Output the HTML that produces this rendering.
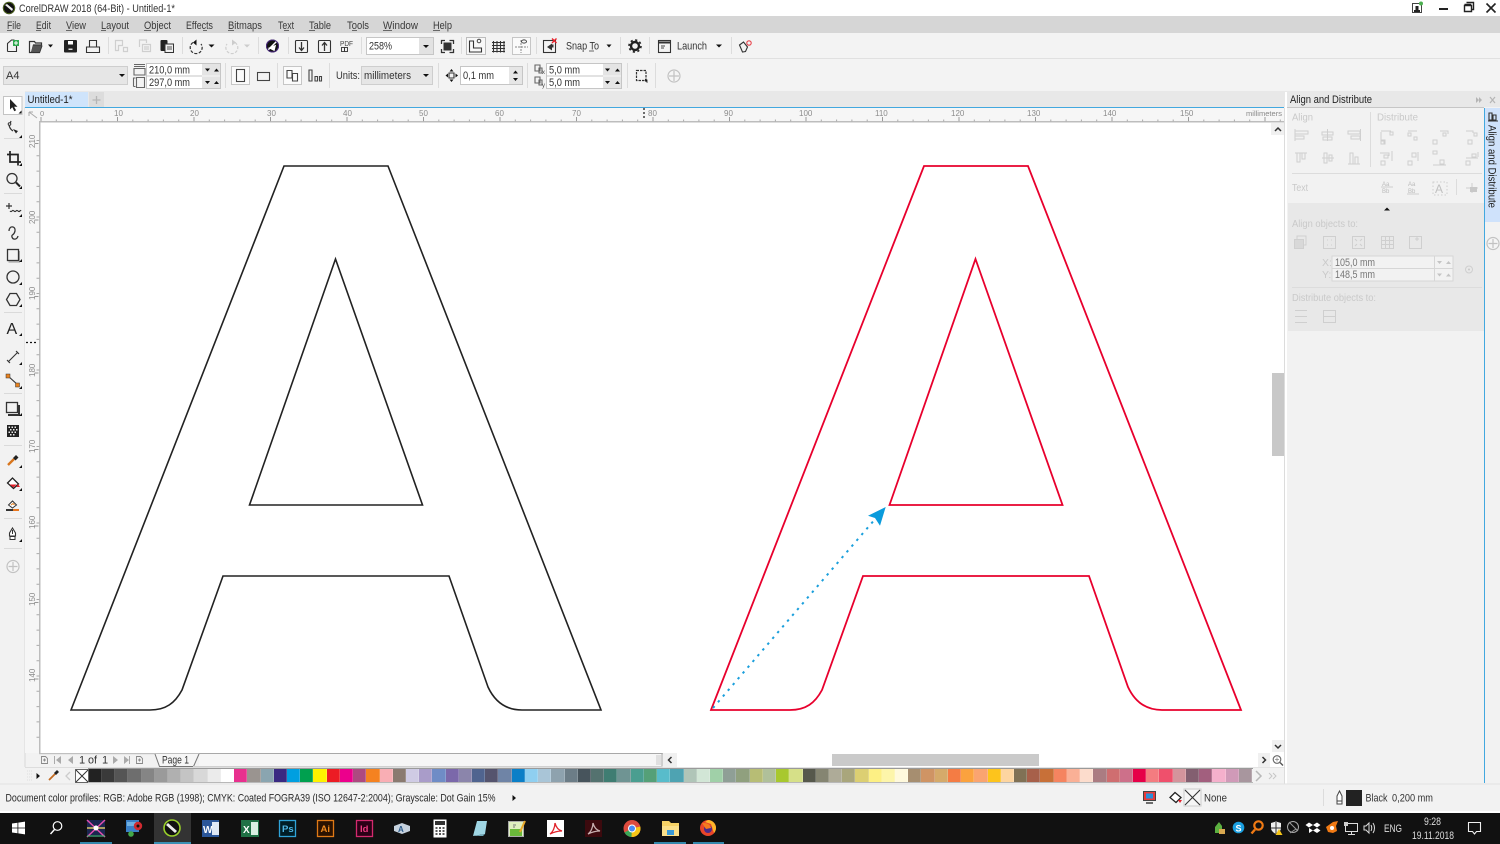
<!DOCTYPE html>
<html><head><meta charset="utf-8"><title>CorelDRAW 2018</title>
<style>
html,body{margin:0;padding:0;width:1500px;height:844px;overflow:hidden;background:#f2f2f2}
svg{display:block;position:absolute;left:0;top:0}
text{font-family:"Liberation Sans",sans-serif;font-size:10px;fill:#333}
.pal{position:absolute;left:88.7px;top:769px;width:1163.5px;height:13px;display:flex}
.pal i{flex:1;display:block;border-right:1px solid rgba(255,255,255,.18);box-sizing:border-box}
.m{font-size:11px;fill:#3a3a3a}
.r{font-size:8px;fill:#8c8c8c}
.d{fill:#c9c9c9;font-size:10.5px}
.ic{fill:none;stroke:#333;stroke-width:1.1}
.dis{fill:none;stroke:#cfcfcf;stroke-width:1}
.t{fill:#111}
</style></head><body>
<svg width="1500" height="844" viewBox="0 0 1500 844" xmlns="http://www.w3.org/2000/svg">
<!-- bands -->
<rect width="1500" height="844" fill="#f2f2f2"/>
<rect width="1500" height="16" fill="#fff"/>
<rect y="16" width="1500" height="17" fill="#d6d6d6"/>
<rect y="33" width="1500" height="25" fill="#f3f3f3"/>
<rect y="58" width="1500" height="1" fill="#e0e0e0"/>
<rect y="59" width="1500" height="32" fill="#f3f3f3"/>
<rect x="25" y="91" width="1262" height="16" fill="#e8e8e8"/>
<rect x="1287" y="91" width="213" height="16" fill="#e8e8e8"/>
<rect x="0" y="91" width="25" height="693" fill="#f2f2f2"/>
<rect x="24.5" y="107" width="1" height="660" fill="#d8d8d8"/>

<!-- title bar -->
<circle cx="9" cy="8" r="6.2" fill="#111"/><path d="M5 5l7 6 1-2-6-5z" fill="#eee"/><circle cx="9" cy="8" r="5.6" fill="none" stroke="#6a8f20" stroke-width=".6"/>
<text x="19" y="12" style="font-size:11px" textLength="156" lengthAdjust="spacingAndGlyphs">CorelDRAW 2018 (64-Bit) - Untitled-1*</text>
<rect x="1412.5" y="3.5" width="9" height="9" fill="#fff" stroke="#444"/><path d="M1414 12v-2h6v2zM1415.5 6h3v4h-3z" fill="#222"/><circle cx="1421" cy="3.5" r="2" fill="#4cb050"/>
<rect x="1439" y="8" width="9" height="2" fill="#222"/>
<path class="ic" style="stroke-width:1.4;stroke:#222" d="M1464.5 4.5h6v1M1466.5 2.5h7v7h-2M1464.5 5.5h7v6h-7z"/>
<path d="M1486.5 3.5l9 9M1495.5 3.5l-9 9" stroke="#222" stroke-width="1.6" fill="none"/>

<!-- menu -->
<text class="m" x="7" y="29" textLength="14" lengthAdjust="spacingAndGlyphs">File</text>
<text class="m" x="36" y="29" textLength="15" lengthAdjust="spacingAndGlyphs">Edit</text>
<text class="m" x="66" y="29" textLength="20" lengthAdjust="spacingAndGlyphs">View</text>
<text class="m" x="101" y="29" textLength="28" lengthAdjust="spacingAndGlyphs">Layout</text>
<text class="m" x="144" y="29" textLength="27" lengthAdjust="spacingAndGlyphs">Object</text>
<text class="m" x="186" y="29" textLength="27" lengthAdjust="spacingAndGlyphs">Effects</text>
<text class="m" x="228" y="29" textLength="34" lengthAdjust="spacingAndGlyphs">Bitmaps</text>
<text class="m" x="278" y="29" textLength="16" lengthAdjust="spacingAndGlyphs">Text</text>
<text class="m" x="309" y="29" textLength="22" lengthAdjust="spacingAndGlyphs">Table</text>
<text class="m" x="347" y="29" textLength="22" lengthAdjust="spacingAndGlyphs">Tools</text>
<text class="m" x="383" y="29" textLength="35" lengthAdjust="spacingAndGlyphs">Window</text>
<text class="m" x="433" y="29" textLength="19" lengthAdjust="spacingAndGlyphs">Help</text>
<path stroke="#444" stroke-width=".8" d="M7 30.5h5M36 30.5h5M66 30.5h6M101 30.5h5M144 30.5h7M203 30.5h4M228 30.5h6M284 30.5h5M309 30.5h6M352 30.5h5M383 30.5h9M433 30.5h7"/>

<!-- toolbar 1 separators -->
<path stroke="#dcdcdc" d="M108.5 37v17M182.5 37v17M258.5 37v17M288.5 37v17M361.5 37v17M461.5 37v17M536.5 37v17M620.5 37v17M649.5 37v17M731.5 37v17"/>
<!-- new -->
<path class="ic" d="M7.5 51.5v-8l4-3.5h3M7.5 51.5h9v-6"/><rect x="13" y="40" width="6" height="6" fill="#2fa84f"/><path d="M16 41v4M14 43h4" stroke="#fff"/>
<!-- open -->
<path d="M29.5 52.500v-11h5l1 1.500h6v2h-8l-2 7.500zm0 0h10l2.500-7" class="ic" style="stroke-width:1.2"/><path d="M31 52l2-6.500h8.500l-2 6.500z" fill="#555"/><polygon class="t" points="48,44.500 53,44.500 50.500,47.500"/>
<!-- save -->
<rect x="64" y="40" width="13" height="12.500" rx="1" fill="#222"/><rect x="68" y="41" width="5" height="3.500" fill="#fff"/><rect x="68.500" y="48.500" width="4" height="1.500" fill="#ddd"/>
<!-- print -->
<path class="ic" d="M89.500 47v-6.500h7v6.500M86.500 52.500v-5.500h13v5.500z"/>
<!-- cut/copy/paste -->
<path class="dis" style="stroke-width:1.2" d="M115.500 50.500v-10h7v5h-4v5zM123.500 47.500h4v4h-4zM139.500 47v-7h7v3M142.500 44.500h8v7h-8zM144 47h5M144 49h5"/>
<rect x="160.500" y="40" width="7" height="11" rx="1" fill="#222"/><rect x="165" y="44" width="8.500" height="8.500" fill="#f0f0f0" stroke="#333"/><path d="M167 47h5M167 49h5" stroke="#555"/>
<!-- undo/redo -->
<path class="ic" style="stroke-width:1.2;stroke-dasharray:3 1.500" d="M193 42.500a6 6 0 1 0 8 1.500"/><polygon class="t" points="196.500,39.500 193,42.500 196.500,45.500"/><polygon class="t" points="208.500,44.500 214.500,44.500 211.500,47.500"/>
<path class="dis" style="stroke-width:1.2;stroke-dasharray:3 1.500" d="M235 42.500a6 6 0 1 1 -8 1.500"/><polygon fill="#ccc" points="232,39.500 236,42.500 232,45.500"/><polygon fill="#ccc" points="244,44.500 250,44.500 247,47.500"/>
<!-- corel -->
<circle cx="272.500" cy="46" r="6.500" fill="#111"/><path d="M268 50l9-9M270 48l5-2-1 4z" stroke="#fff" stroke-width="1.500" fill="#fff"/><circle cx="272.500" cy="46" r="6" fill="none" stroke="#4b2a82"/>
<!-- import/export -->
<rect x="295.500" y="40.500" width="12" height="12" class="ic" rx="1"/><path d="M301.500 42v8M299 47.500l2.500 3 2.500-3" class="ic" style="stroke-width:1.3"/>
<rect x="318.500" y="40.500" width="12" height="12" class="ic" rx="1"/><path d="M324.500 51v-8M322 45.500l2.500-3 2.500 3" class="ic" style="stroke-width:1.3"/>
<text x="340" y="46" style="font-size:7px;fill:#444" textLength="13" lengthAdjust="spacingAndGlyphs">PDF</text><rect x="341.500" y="47.500" width="6" height="4" class="ic" style="stroke-width:.9"/><path d="M344.500 47v5" stroke="#333"/>
<!-- zoom combo -->
<rect x="366.500" y="37.500" width="67" height="17" fill="#fff" stroke="#c6c6c6"/><rect x="419" y="38" width="14" height="16" fill="#e2e2e2"/>
<text x="369" y="49.500" style="font-size:11px" textLength="23" lengthAdjust="spacingAndGlyphs">258%</text><polygon class="t" points="423,45 429,45 426,48"/>
<rect x="443.500" y="42.500" width="8" height="8" fill="#333"/><path class="ic" style="stroke-width:1.3" d="M441.500 44v-3.500h3.500M449.500 40.500h4v3.500M441.500 49v3.500h3.500M449.500 52.500h4v-3.500"/>
<!-- rulers / grid / guides -->
<rect x="466.500" y="37.500" width="19" height="17" fill="#f8f8f8" stroke="#bdbdbd"/><path class="ic" d="M469.500 41v11h12v-4h-8v-7z"/><circle cx="479" cy="41" r="1.800" fill="none" stroke="#444"/>
<path stroke="#333" stroke-width="1.1" d="M492 42.500h13M492 45.500h13M492 48.500h13M492 51.500h13M493.500 41v11.500M497 41v11.500M500.500 41v11.500M504 41v11.500"/>
<rect x="512.500" y="37.500" width="18" height="17" fill="#fafafa" stroke="#c6c6c6"/><path stroke="#888" d="M521 40v13M515 47h13" stroke-dasharray="2 1"/><ellipse cx="524" cy="41.500" rx="2.500" ry="1.600" fill="none" stroke="#444"/>
<!-- snap -->
<rect x="543.500" y="40.500" width="12" height="12" class="ic"/><path d="M547 47l5 3.500v-3h1.500v-3h-1.500v-1z" fill="#333"/><path d="M552 38.500l4.500 4.500M556.500 38.500l-4.500 4.500" stroke="#e8212a" stroke-width="1.4"/>
<text x="566" y="49.500" style="font-size:11px" textLength="33" lengthAdjust="spacingAndGlyphs">Snap To</text><path d="M589 51h5" stroke="#444" stroke-width=".8"/>
<polygon class="t" points="606.500,44.500 611.500,44.500 609,47.500"/>
<circle cx="635" cy="46" r="4" fill="none" stroke="#222" stroke-width="2.4"/><circle cx="635" cy="46" r="6" fill="none" stroke="#222" stroke-width="1.6" stroke-dasharray="2.2 2.5"/>
<rect x="658.500" y="40.500" width="12" height="12" class="ic"/><path d="M659 42.500h11" stroke="#333" stroke-width="2"/><path d="M661 46h4M661 48h3" stroke="#444"/>
<text x="677" y="49.500" style="font-size:11px" textLength="30" lengthAdjust="spacingAndGlyphs">Launch</text><polygon class="t" points="716,44.500 722,44.500 719,47.500"/>
<path class="ic" d="M739.500 45l4-3 4 5-2 4.500-3 .5z"/><circle cx="749" cy="43" r="2.200" fill="none" stroke="#e8424a" stroke-width="1.1"/>

<!-- toolbar 2 -->
<rect x="3.500" y="66.500" width="124" height="18" fill="#e6e6e6" stroke="#cecece"/><text x="6" y="79" style="font-size:11px">A4</text><polygon class="t" points="119,74 125,74 122,77"/>
<path class="ic" style="stroke:#666" d="M134 66.500h11M134 64.500h11M134 68.500h11v6.500h-11zM133.500 77.500v9M136.500 77.500h8v10h-8zM133.500 78h2M133.500 86.500h2"/>
<rect x="146.500" y="63.500" width="74" height="25" fill="#fff" stroke="#c6c6c6"/><path d="M146 76h75" stroke="#c6c6c6"/><rect x="202" y="64" width="18" height="24" fill="#e4e4e4"/><path d="M202 76h18" stroke="#f6f6f6"/>
<text x="149" y="73.500" style="font-size:11px" textLength="41" lengthAdjust="spacingAndGlyphs">210,0 mm</text><text x="149" y="86" style="font-size:11px" textLength="41" lengthAdjust="spacingAndGlyphs">297,0 mm</text>
<path class="t" d="M205 68.500h5l-2.500 3zM205 81h5l-2.500 3zM214 71.500h5l-2.500-3zM214 84h5l-2.500-3z"/>
<path stroke="#dcdcdc" d="M225.500 63v25M277.500 63v25M329.500 63v25M438.500 63v25M527.500 63v25M627.500 63v25M655.500 63v25"/>
<rect x="231.500" y="66.500" width="18" height="18" fill="#fbfbfb" stroke="#c6c6c6"/><rect x="236.500" y="69.500" width="8" height="12" class="ic" style="stroke:#444"/>
<rect x="257.500" y="72.500" width="12" height="8" class="ic" style="stroke:#444"/>
<rect x="283.500" y="66.500" width="18" height="18" fill="#fbfbfb" stroke="#c6c6c6"/><path class="ic" style="stroke:#444" d="M287 70.500h5v7.500h-5zM292.500 73.500h5v7.500h-5z"/>
<path class="ic" style="stroke:#444" d="M309 70h3v11h-3zM315 76.500h2.500v4.500h-2.500zM319.500 76.500h2v4.500h-2z"/>
<text x="336" y="79" style="font-size:11px" textLength="24" lengthAdjust="spacingAndGlyphs">Units:</text>
<rect x="361.500" y="66.500" width="71" height="18" fill="#e6e6e6" stroke="#cecece"/><text x="364" y="79" style="font-size:11px" textLength="47" lengthAdjust="spacingAndGlyphs">millimeters</text><polygon class="t" points="423,74 429,74 426,77"/>
<path class="ic" d="M449 73h5v5h-5z"/><path class="t" d="M451.500 69l2 2.500h-4zM451.500 82l2-2.500h-4zM445.500 75.500l2.500-2v4zM458 75.500l-2.500-2v4z"/>
<rect x="460.500" y="66.500" width="62" height="18" fill="#fff" stroke="#c6c6c6"/><rect x="509" y="67" width="13" height="17" fill="#e6e6e6"/>
<text x="463" y="79" style="font-size:11px" textLength="31" lengthAdjust="spacingAndGlyphs">0,1 mm</text><path class="t" d="M515.500 70.500l2.500 3h-5zM515.500 81l2.500-3h-5z"/>
<path class="ic" style="stroke:#666" d="M535 65h5v6h-5zM539 68h3v5h-3zM535 77h5v6h-5zM539 80h3v5h-3z"/><text x="542" y="74" style="font-size:6px;fill:#555">x</text><text x="542" y="87" style="font-size:6px;fill:#555">y</text>
<rect x="546.500" y="63.500" width="75" height="25" fill="#fff" stroke="#c6c6c6"/><path d="M546 76h76" stroke="#c6c6c6"/><rect x="603" y="64" width="18" height="24" fill="#e4e4e4"/><path d="M603 76h18" stroke="#f6f6f6"/>
<text x="549" y="73.500" style="font-size:11px" textLength="31" lengthAdjust="spacingAndGlyphs">5,0 mm</text><text x="549" y="86" style="font-size:11px" textLength="31" lengthAdjust="spacingAndGlyphs">5,0 mm</text>
<path class="t" d="M605 68.500h5l-2.500 3zM605 81h5l-2.500 3zM615 71.500h5l-2.500-3zM615 84h5l-2.500-3z"/>
<path class="ic" style="stroke-dasharray:2.5 1;stroke-width:1.2" d="M636.500 70.500h9.500v10h-9.500z"/><path class="t" d="M645 79l3 1-1 .8.8 1.500-1 .4-.7-1.500-.9.7z"/>
<circle cx="674" cy="76" r="6" fill="#f5f5f5" stroke="#c2c2c2" stroke-width="1.2"/><path d="M674 71v10M669 76h10" stroke="#c2c2c2" stroke-width="1.2"/>

<!-- tabs -->
<rect x="25" y="92" width="63" height="15" fill="#cfe4fb"/><text x="27.500" y="103" style="font-size:11px;fill:#222" textLength="45" lengthAdjust="spacingAndGlyphs">Untitled-1*</text>
<rect x="89" y="92" width="15" height="15" fill="#dcdcdc"/><path d="M96.500 96v8M92.500 100h8" stroke="#b5b5b5" stroke-width="1.3"/>
<rect x="25" y="107" width="1259" height="1" fill="#42a8df"/>

<!-- rulers -->
<rect x="25" y="108" width="1259" height="14" fill="#f6f6f6"/>
<rect x="25" y="122" width="15" height="631" fill="#f6f6f6"/>
<rect x="40" y="122" width="1230" height="631" fill="#fff"/>
<rect x="39" y="121" width="1245" height="1.5" fill="#bdbdbd"/>
<rect x="39" y="121" width="1.5" height="633" fill="#bdbdbd"/>
<path d="M40.5 120.500h1243" stroke="#aaa" stroke-width="2" stroke-dasharray="1 14.3" fill="none"/>
<path d="M40.5 119h1243" stroke="#999" stroke-width="4" stroke-dasharray="1 75.5" fill="none"/>
<path d="M38 140v612" stroke="#aaa" stroke-width="3" stroke-dasharray="1 14.3" fill="none"/>
<path d="M36.500 143v612" stroke="#999" stroke-width="4" stroke-dasharray="1 75.5" fill="none"/>
<path class="dis" style="stroke:#aaa" d="M29 112l8 6M29 112h4M29 112v4"/>
<text class="r" x="40" y="116" style="font-size:7.5px">0</text>
<text class="r" x="114" y="116">10</text><text class="r" x="190" y="116">20</text><text class="r" x="267" y="116">30</text><text class="r" x="343" y="116">40</text><text class="r" x="419" y="116">50</text><text class="r" x="495" y="116">60</text><text class="r" x="572" y="116">70</text><text class="r" x="648" y="116">80</text><text class="r" x="724" y="116">90</text><text class="r" x="799" y="116">100</text><text class="r" x="875" y="116">110</text><text class="r" x="951" y="116">120</text><text class="r" x="1027" y="116">130</text><text class="r" x="1103" y="116">140</text><text class="r" x="1180" y="116">150</text>
<text x="1246" y="116" style="font-size:7.5px;fill:#888" textLength="36" lengthAdjust="spacingAndGlyphs">millimeters</text>
<path d="M644 108v12" stroke="#111" stroke-dasharray="2 2" stroke-width="1.2"/>
<path d="M26 342.500h12" stroke="#111" stroke-dasharray="2 2" stroke-width="1.2"/>
<text class="r" transform="translate(35,148) rotate(-90)">210</text><text class="r" transform="translate(35,224) rotate(-90)">200</text><text class="r" transform="translate(35,300) rotate(-90)">190</text><text class="r" transform="translate(35,377) rotate(-90)">180</text><text class="r" transform="translate(35,453) rotate(-90)">170</text><text class="r" transform="translate(35,529) rotate(-90)">160</text><text class="r" transform="translate(35,606) rotate(-90)">150</text><text class="r" transform="translate(35,682) rotate(-90)">140</text>

<!-- toolbox -->
<rect x="3.500" y="96.500" width="18.500" height="18" fill="#fff" stroke="#c4c4c4"/>
<path d="M10 99l0 10.500 2.300-2.300 2 4 1.800-.9-2-3.600h3.400z" fill="#222"/>
<path stroke="#dadada" d="M4 138.500h18M4 193.500h18M4 312.500h18M4 393.500h18M4 445.500h18M4 518.500h18M4 548.500h18"/>
<path class="ic" style="stroke-width:1.2" d="M9 124c0 3 1 5 4 7M11 121l-1 3"/><path d="M13 129l5 2-2 2.500z" fill="#222"/><circle cx="9.500" cy="124" r="1.300" fill="#fff" stroke="#333"/>
<path class="ic" style="stroke-width:1.7;stroke:#222" d="M10 151v11h11M7 154.500h11v11"/>
<circle cx="12" cy="178.500" r="5" class="ic" style="stroke-width:1.3"/><path d="M16 182.500l4 4" stroke="#222" stroke-width="2"/>
<path class="ic" d="M9 203v6M6 206h6M10 211c2 2 2-2 4 0s2-2 4 0 2-2 3 0" style="stroke-width:1.2"/>
<path class="ic" style="stroke-width:1.3" d="M9 231c0-6 7-5 6 0s-4 3-3 6 5 3 6-1"/>
<rect x="7.500" y="249.500" width="11" height="11" class="ic" style="stroke-width:1.3"/><path d="M19.500 251v11h-11" stroke="#999" fill="none"/>
<circle cx="13" cy="277" r="6" class="ic" style="stroke-width:1.3"/>
<path class="ic" style="stroke-width:1.3" d="M10 293.500h6.500l3.500 6-3.500 6h-6.500l-3.500-6z"/>
<text x="6.500" y="334" style="font-size:16px;fill:#222">A</text>
<path class="ic" d="M8 362l10-10M7 360l3 3M16 351l3 3"/>
<path class="ic" d="M8 376l10 9"/><rect x="6" y="374" width="4" height="4" fill="#e8811e" stroke="#333" stroke-width=".5"/><rect x="15.500" y="383" width="4" height="4" fill="#e8811e" stroke="#333" stroke-width=".5"/>
<rect x="6.500" y="402.500" width="11" height="10" class="ic" style="stroke-width:1.3"/><path d="M19 405v10h-11" stroke="#333" stroke-width="2" fill="none"/>
<rect x="7" y="425" width="12" height="12" fill="#222"/><path d="M8.500 426.500h1.500v1.500h-1.500zM11.500 426.500h1.500v1.500h-1.500zM14.500 426.500h1.500v1.500h-1.500zM10 429h1.500v1.500h-1.500zM13 429h1.500v1.500h-1.500zM16 429h1.500v1.500h-1.500zM8.500 431.500h1.500v1.500h-1.500zM11.500 431.500h1.500v1.500h-1.500zM14.500 431.500h1.500v1.500h-1.500zM10 434h1.500v1.500h-1.500zM13 434h1.500v1.500h-1.500z" fill="#e8e8e8"/>
<path d="M8 465l6-6" stroke="#d8761e" stroke-width="2.4"/><path d="M13 458l3-3 2.500 2.500-3 3z" fill="#222"/>
<path d="M7.500 483l5-5 6 6-5 4.500z" fill="#fff" stroke="#222" stroke-width="1.3"/><path d="M9.500 484.500h7l-3 3z" fill="#e4202a"/><path d="M18 484l2 3h-3.500z" fill="#e4202a"/>
<path d="M8.500 505l4-4 4 4-4 3z" fill="#fff" stroke="#333"/><path d="M11 505l2-1.500 1.500 1.500" stroke="#e8811e" fill="none"/><rect x="6" y="509" width="7" height="2" fill="#333"/><rect x="13" y="509" width="6" height="2" fill="#e8761e"/>
<path d="M12.500 528l3 5v3h-6v-3z" fill="#fff" stroke="#333" stroke-width="1.1"/><rect x="10" y="536.500" width="5" height="3" fill="#fff" stroke="#333"/><path d="M12.500 530v4" stroke="#333"/>
<circle cx="13" cy="566.500" r="6" fill="#f5f5f5" stroke="#c2c2c2" stroke-width="1.2"/><path d="M13 562v9M8.500 566.500h9" stroke="#c2c2c2" stroke-width="1.2"/>
<path class="t" d="M21.500 110.500v3h-3zM22 135v3h-3zM22 163v3h-3zM22 186v3h-3zM22 214v3h-3zM22 259v3h-3zM22 282v3h-3zM22 304v3h-3zM22 333v3h-3zM22 362v3h-3zM22 386v3h-3zM22 413v3h-3zM22 465v3h-3zM22 488v3h-3zM22 539v3h-3z"/>

<!-- artwork -->
<g fill="none" stroke-linejoin="miter">
<path stroke="#e8002d" stroke-width="1.8" d="M711 710L924 166H1028L1241 710H1162C1146 710 1135 702 1128 687L1089 576H863L822 690C815 703 806 710 790 710Z"/>
<path stroke="#e8002d" stroke-width="1.8" d="M975.5 259L1062.5 505H889.5Z"/>
<path stroke="#222" stroke-width="1.6" d="M71 710L284 166H388L601 710H522C506 710 495 702 488 687L449 576H223L182 690C175 703 166 710 150 710Z"/>
<path stroke="#222" stroke-width="1.6" d="M335.5 259L422.500 505H249.5Z"/>
<path stroke="#1a9fdc" stroke-width="2" stroke-dasharray="2.4 5.2" d="M713 708L876 518"/>
</g>
<path d="M885.7 507L868 515.7L875 518L880 525.7Z" fill="#0a9bdc"/>

<!-- vertical scrollbar -->
<rect x="1270" y="122.500" width="14" height="646" fill="#fff"/>
<rect x="1271" y="123" width="13" height="12" fill="#f0f0f0"/><path d="M1275 131l3-3 3 3" class="ic" style="stroke-width:1.5"/>
<rect x="1272" y="373" width="12" height="83" fill="#c8c8c8"/>
<rect x="1272" y="740" width="12" height="13" fill="#f0f0f0"/><path d="M1275 745l3 3 3-3" class="ic" style="stroke-width:1.5"/>
<rect x="1284" y="108" width="1" height="676" fill="#dcdcdc"/>
<rect x="1285" y="92" width="2" height="692" fill="#fff"/>

<!-- docker -->
<rect x="1287" y="107" width="197" height="1" fill="#c6c6c6"/>
<rect x="1288" y="108" width="196" height="95" fill="#f2f2f2"/>
<rect x="1288" y="203" width="196" height="128" fill="#e8e8e8"/>
<rect x="1288" y="331" width="196" height="453" fill="#f2f2f2"/>
<rect x="1484" y="108" width="1" height="675" fill="#42a8df"/>
<rect x="1485" y="108" width="15" height="114" fill="#cfe2fb"/>
<text x="1290" y="103" style="font-size:11px;fill:#222" textLength="82" lengthAdjust="spacingAndGlyphs">Align and Distribute</text>
<path d="M1476 97v6l3-3zM1479 97v6l3-3z" fill="#b5b5b5"/><path d="M1490 97l5 6M1495 97l-5 6" stroke="#b5b5b5" stroke-width="1.2"/>
<text class="d" x="1292" y="120.500" textLength="21" lengthAdjust="spacingAndGlyphs">Align</text><text class="d" x="1377" y="120.500" textLength="41" lengthAdjust="spacingAndGlyphs">Distribute</text>
<path stroke="#dcdcdc" d="M1370.5 112v55M1292 173.500h190M1456.5 179v16"/>
<g class="dis">
<path d="M1295 131h13v3h-13zM1295 136h9v3h-9zM1295 129v12M1322 132h11v3h-11zM1323 137h9v3h-9zM1327.5 129v12M1348 131h12v3h-12zM1351 136h9v3h-9zM1360.5 129v12"/>
<path d="M1295 153h12M1297 153v9h3v-9zM1302 153v6h3v-6zM1322 158h12M1324 153v10h3v-10zM1329 155v6h3v-6zM1348 164h12M1350 153v11h3v-11zM1355 157v7h3v-7z"/>
<path d="M1381 132v12h3v-3h-3zM1381 131h10M1390 132h3v3h-3zM1381 140h4v4h-4zM1408 131h9M1408 133h3v3h-3zM1414 137h3v3h-3zM1433 140h4v4h-4zM1440 131h8v3M1443 133h3v3h-3zM1466 131h7v2M1468 140h4v4h-4zM1474 133h3v3h-3z"/>
<path d="M1380 153h9v3M1384 155h4v3h-4zM1381 161h4v4h-4zM1392 151v10M1408 161h4v4h-4zM1412 153h4v4h-4zM1418 152v9M1433 151h4v3h-4zM1440 160h4v4h-4zM1433 165h13M1466 161h4v4h-4zM1472 154h4v3h-4zM1466 158h12M1478 152v5"/>
</g>
<text class="d" x="1292" y="191" textLength="16" lengthAdjust="spacingAndGlyphs">Text</text>
<text x="1382" y="186" style="font-size:6px;fill:#bbb">Aa</text><text x="1382" y="193" style="font-size:6px;fill:#bbb">Bb</text><text x="1408" y="186" style="font-size:6px;fill:#bbb">Aa</text><text x="1408" y="193" style="font-size:6px;fill:#bbb">Bb</text>
<path class="dis" d="M1381 187h12M1407 194h12M1466 188h12M1472 183v10"/>
<text x="1435" y="193" style="font-size:12px;fill:#c0c0c0">A</text><path class="dis" style="stroke-dasharray:1.5 2" d="M1433 182h14v13h-14z"/>
<rect x="1470" y="187" width="7" height="5" fill="#c8c8c8"/>
<path class="t" d="M1387 207.500l3 3h-6z"/>
<text class="d" x="1292" y="227" textLength="66" lengthAdjust="spacingAndGlyphs">Align objects to:</text>
<g class="dis">
<rect x="1294.5" y="239.500" width="9" height="9" fill="#d8d8d8"/><path d="M1297 239v-3h9v9h-3"/>
<rect x="1323.5" y="236.500" width="12" height="12"/><rect x="1352.5" y="236.500" width="12" height="12"/>
<path d="M1327 240h1M1331 240h1M1327 245h1M1331 245h1M1355 239l2 2M1362 239l-2 2M1355 246l2-2M1362 246l-2-2"/>
<path d="M1381.5 236.500h12v12h-12zM1385.5 236.500v12M1389.5 236.500v12M1381.5 240.500h12M1381.5 244.500h12"/>
<path d="M1409.5 236.500h12v12h-12zM1415 239h4M1417 237v4"/>
</g>
<rect x="1332" y="256" width="121" height="25" fill="#f2f2f2" stroke="#d6d6d6"/><path d="M1332 268.500h121M1434.5 256v25" stroke="#d6d6d6"/>
<text class="d" x="1322" y="266">X:</text><text class="d" x="1322" y="278">Y:</text>
<text x="1335" y="266" style="font-size:11px;fill:#777" textLength="40" lengthAdjust="spacingAndGlyphs">105,0 mm</text><text x="1335" y="278" style="font-size:11px;fill:#777" textLength="40" lengthAdjust="spacingAndGlyphs">148,5 mm</text>
<path fill="#c4c4c4" d="M1437 261h5l-2.500 3zM1446 264h5l-2.500-3zM1437 273.500h5l-2.500 3zM1446 276.500h5l-2.500-3z"/>
<circle cx="1469" cy="269.500" r="3.500" class="dis"/><circle cx="1469" cy="269.500" r="1" fill="#c8c8c8"/>
<path stroke="#dcdcdc" d="M1292 287.500h190"/>
<text class="d" x="1292" y="301" textLength="84" lengthAdjust="spacingAndGlyphs">Distribute objects to:</text>
<g class="dis"><path d="M1295 310.500h12M1295 322.500h12M1295 316.500h12"/><rect x="1323.5" y="310.500" width="12" height="12"/><path d="M1323 316.500h13"/></g>
<!-- docker tab -->
<path class="ic" style="stroke:#333" d="M1489 113h3v7h-3zM1493 115h3v5h-3zM1488 121h10"/>
<text transform="translate(1488.5,125) rotate(90)" style="font-size:11px;fill:#222" textLength="83" lengthAdjust="spacingAndGlyphs">Align and Distribute</text>
<circle cx="1493" cy="243.500" r="6" fill="#f5f5f5" stroke="#c2c2c2" stroke-width="1.2"/><path d="M1493 239v9M1488.5 243.500h9" stroke="#c2c2c2" stroke-width="1.2"/>

<!-- page nav -->
<rect x="25.5" y="753" width="638" height="15" fill="#f2f2f2"/>
<rect x="663" y="752" width="621" height="16" fill="#fff"/>
<rect x="39" y="753" width="624" height="1.2" fill="#c0c0c0"/>
<g fill="#aaa">
<path class="ic" style="stroke:#888;stroke-width:.9" d="M41.5 756.500h4l2 2v5h-6zM43 760h3M44.5 758.500v3"/>
<path d="M54 756v8h1v-8zM61 756l-5 4 5 4zM73 756l-5 4 5 4zM113 756l5 4-5 4zM124 756l5 4-5 4zM130 756v8h-1v-8z"/>
<path class="ic" style="stroke:#888;stroke-width:.9" d="M136.5 756.500h4l2 2v5h-6zM138 760h3M139.500 758.500v3"/>
</g>
<text x="79" y="763.500" style="font-size:11px">1</text><text x="88" y="763.500" style="font-size:11px" textLength="9" lengthAdjust="spacingAndGlyphs">of</text><text x="102" y="763.500" style="font-size:11px">1</text>
<path d="M199 754h463v12.500h-463" fill="#f6f6f6"/>
<path d="M155 754l4.500 12.500h34l5.500-12.500" fill="#f6f6f6" stroke="#777"/>
<path d="M199 753.500h463v13" fill="none" stroke="#a8a8a8"/><path d="M193 766.500h469" stroke="#d0d0d0"/>
<text x="162" y="763.500" style="font-size:11px" textLength="27" lengthAdjust="spacingAndGlyphs">Page 1</text>
<rect x="656" y="755" width="5" height="10" fill="#e0e0e0"/>
<rect x="663" y="753" width="14" height="14" fill="#f0f0f0"/><path d="M671.5 757l-3 3 3 3" class="ic" style="stroke-width:1.5"/>
<rect x="832" y="754" width="207" height="12" fill="#cacaca"/>
<rect x="1258" y="753" width="12" height="14" fill="#f0f0f0"/><path d="M1262.5 757l3 3-3 3" class="ic" style="stroke-width:1.5"/>
<circle cx="1277" cy="759.500" r="3.800" class="ic" style="stroke:#666"/><path d="M1280 762.500l3 3" stroke="#555" stroke-width="1.4"/><path d="M1275 759.500h4M1277 757.500v4" stroke="#888" stroke-width=".8"/>

<!-- palette row -->
<rect x="25" y="767.500" width="1259" height="1" fill="#c8c8c8"/>
<rect x="25" y="768" width="1259" height="16" fill="#f2f2f2"/>
<path d="M27 771h6M27 774h6M27 777h6M27 780h6" stroke="#ddd" stroke-dasharray="1 1"/>
<path class="t" d="M36.5 773v6l3.500-3z"/>
<path d="M49 780l6-6" stroke="#c26a20" stroke-width="1.8"/><path d="M54 773l3-3 2 2-3 3z" fill="#222"/>
<path d="M70 772l-4 4 4 4" stroke="#ccc" stroke-width="1.3" fill="none"/>
<rect x="75.5" y="769.500" width="13" height="13" fill="#fff" stroke="#666"/><path d="M76 770l12 12M88 770l-12 12" stroke="#333"/>
<path d="M1256 771l5 5-5 5" stroke="#b8b8b8" stroke-width="1.5" fill="none"/><path d="M1269 773l3 3-3 3M1273 773l3 3-3 3" stroke="#c6c6c6" fill="none"/>
<rect x="88" y="768" width="1165" height="1" fill="#9a9a9a"/>
<rect x="88" y="782" width="1165" height="1" fill="#b8b8b8"/>

<!-- status bar -->
<rect y="783.500" width="1500" height="1" fill="#e2e2e2"/>
<rect y="811" width="1500" height="2" fill="#fff"/>
<text x="5.500" y="801.500" style="font-size:11px;fill:#2a2a2a" textLength="490" lengthAdjust="spacingAndGlyphs">Document color profiles: RGB: Adobe RGB (1998); CMYK: Coated FOGRA39 (ISO 12647-2:2004); Grayscale: Dot Gain 15%</text>
<path class="t" d="M512.5 795v6l3.500-3z"/>
<rect x="1143.5" y="791.500" width="12" height="9" fill="#e83a3a" stroke="#444"/><rect x="1146" y="793.500" width="7" height="5" fill="#2a8fd8"/><path d="M1146 803h7" stroke="#333" stroke-width="1.4"/>
<path d="M1170 797.500l5-5 6 5-5 5z" fill="#fff" stroke="#222" stroke-width="1.3"/><path d="M1178 800h4l-2 3z" fill="#e4202a"/>
<rect x="1184" y="789" width="17" height="17" fill="#f6f6f6" stroke="#ccc"/><path d="M1185 790l15 15M1200 790l-15 15" stroke="#333" stroke-width="1.1"/>
<text x="1204" y="801.500" style="font-size:11px" textLength="23" lengthAdjust="spacingAndGlyphs">None</text>
<path stroke="#dcdcdc" d="M1323.5 789v17"/>
<path d="M1339.5 791l2.500 5v5h-5v-5z" fill="#fff" stroke="#444"/><rect x="1337" y="801" width="5" height="3" fill="#fff" stroke="#444"/>
<rect x="1346" y="790" width="16" height="16" fill="#222"/>
<text x="1365.500" y="801.500" style="font-size:11px" textLength="22" lengthAdjust="spacingAndGlyphs">Black</text><text x="1392" y="801.500" style="font-size:11px" textLength="41" lengthAdjust="spacingAndGlyphs">0,200 mm</text>

<!-- taskbar -->
<rect y="813" width="1500" height="31" fill="#111"/>
<rect x="154" y="813" width="37" height="31" fill="#333"/>
<path fill="#3fb0e0" opacity=".75" d="M80 842h32v2h-32zM154 842h37v2h-37zM654 842h32v2h-32zM693 842h31v2h-31z"/>
<path fill="#fff" d="M12 823.500l5.500-.8v4.900h-5.500zM18.300 822.600l6.700-1v6h-6.700zM12 828.400h5.500v4.900l-5.500-.8zM18.300 828.400h6.700v6l-6.700-1z"/>
<circle cx="57.500" cy="826" r="4.300" fill="none" stroke="#fff" stroke-width="1.2"/><path d="M54.500 829.500l-4 4.500" stroke="#fff" stroke-width="1.4"/>
<!-- app icons -->
<rect x="87" y="820" width="18" height="17" fill="#1b2650"/><path d="M87 820l18 17M105 820l-18 17" stroke="#e64fb0" stroke-width="1.5"/><path d="M87 828h18" stroke="#ffe26a" stroke-width="1.2"/><circle cx="96" cy="828" r="2.500" fill="#fff"/><path d="M87 836h18" stroke="#3fc060"/>
<rect x="126" y="820" width="13" height="12" fill="#3a80c8"/><path d="M127 822h11v4h-11z" fill="#70b0e0"/><circle cx="138" cy="826" r="4.200" fill="#d02a30"/><circle cx="138" cy="826" r="1.500" fill="#111"/><circle cx="131" cy="834" r="2.800" fill="#44a848"/>
<circle cx="172" cy="828" r="8" fill="#111" stroke="#9ad02a" stroke-width="1.6"/><path d="M168 823l9 8-2 2-9-8z" fill="#eee"/>
<rect x="202" y="820" width="17" height="17" fill="#2b5699"/><rect x="212" y="822" width="7" height="13" fill="#dfe8f5"/><text x="203" y="833" style="font-size:10px;font-weight:bold;fill:#fff">W</text>
<rect x="241" y="820" width="18" height="17" fill="#1f7145"/><rect x="251" y="822" width="7" height="13" fill="#d9efe2"/><text x="243" y="833" style="font-size:10px;font-weight:bold;fill:#fff">X</text>
<rect x="279.5" y="820.500" width="16" height="16" fill="#001d26" stroke="#2fa3d8" stroke-width="1.3"/><text x="282" y="832" style="font-size:9.5px;font-weight:bold;fill:#4fb5e4">Ps</text>
<rect x="317.5" y="820.500" width="16" height="16" fill="#2b1200" stroke="#e07a16" stroke-width="1.3"/><text x="320.500" y="832" style="font-size:9.5px;font-weight:bold;fill:#f08a1e">Ai</text>
<rect x="356.5" y="820.500" width="16" height="16" fill="#2b0016" stroke="#d42a6e" stroke-width="1.3"/><text x="360" y="832" style="font-size:9.5px;font-weight:bold;fill:#ec3a80">Id</text>
<path d="M394 826l8-3 8 3v5l-8 3-8-3z" fill="#c6d2de"/><text x="398" y="832" style="font-size:8px;fill:#2a5a8a;font-weight:bold">A</text>
<rect x="433.5" y="819.500" width="13" height="18" fill="#fff"/><rect x="435" y="821" width="10" height="4" fill="#333"/><path d="M435.5 828h9M435.5 831h9M435.5 834h9" stroke="#222" stroke-width="1.6" stroke-dasharray="2 1.5"/>
<path d="M473 836l4-15h10l-2 13z" fill="#9fd6e4"/><path d="M474 836h9l2-2z" fill="#6fa8b8"/>
<rect x="508.5" y="821.500" width="15" height="15" fill="#dff0c0" stroke="#aaa"/><rect x="510" y="829" width="12" height="7" fill="#6ab83a"/><path d="M513 825h3M513 827h2" stroke="#777"/><path d="M520 832l5-11" stroke="#e8a82a" stroke-width="2"/>
<rect x="547" y="820" width="17" height="17" fill="#fff"/><path d="M550 834c3-2 5-7 5-11 1 4 3 7 7 8-4 0-8 1-12 3z" fill="none" stroke="#e0222a" stroke-width="1.3"/>
<rect x="585" y="820" width="17" height="17" fill="#3c0a0e"/><path d="M588 834c3-2 5-7 5-11 1 4 3 7 7 8-4 0-8 1-12 3z" fill="none" stroke="#c8b0b0" stroke-width="1.3"/>
<circle cx="632" cy="828.500" r="8.500" fill="#dd4b3e"/><path d="M632 828.500l-7.500 4a8.500 8.500 0 0 0 7 4.500z" fill="#3aa757"/><path d="M632 828.500l8.300-2a8.500 8.500 0 0 1-8.800 10.500z" fill="#f5c518"/><circle cx="632" cy="828.500" r="4" fill="#fff"/><circle cx="632" cy="828.500" r="3" fill="#4a8af4"/>
<path d="M662 821h7l2 2h8v13h-17z" fill="#f6d266"/><rect x="662" y="826" width="17" height="10" fill="#fbe08a"/><rect x="667" y="830" width="7" height="5" fill="#3a9ad8"/>
<circle cx="708" cy="828" r="8" fill="#e8452a"/><path d="M708 820a8 8 0 0 1 8 8c0 2-1 4-2 5l-3-9-6-2z" fill="#fdb52a"/><circle cx="708" cy="829" r="4" fill="#4a2a8a"/><path d="M702 823c3 0 8 0 9 5l-5 1z" fill="#f47a20"/>
<!-- tray -->
<path d="M1215 827l4-5 3 4v7h-7z" fill="#5cb040"/><rect x="1219" y="829" width="6" height="5" fill="#d8a850"/>
<circle cx="1238.5" cy="827.500" r="5.800" fill="#1a9fe0"/><text x="1235.500" y="831.500" style="font-size:9px;font-weight:bold;fill:#fff">S</text>
<circle cx="1258.5" cy="825.500" r="4.200" fill="none" stroke="#f07a14" stroke-width="2.2"/><path d="M1255 829.500l-3.500 4" stroke="#f07a14" stroke-width="2.4"/>
<path d="M1271 823l5-1.500 5 1.500v5c0 3-3 5-5 6-2-1-5-3-5-6z" fill="#eee"/><path d="M1276 822v12M1271 828h10" stroke="#333"/><path d="M1279 829l3.500 6h-7z" fill="#f5c518"/>
<circle cx="1293" cy="827" r="5.500" fill="none" stroke="#aaa"/><path d="M1289 822l9 9M1290 833l6-4" stroke="#999"/>
<path d="M1309 822.500l4 2.500-4 2.500-3.500-2.500zM1317 822.500l3.500 2.500-3.500 2.500-4-2.500zM1309 828l4 2.500-4 2.500z" fill="#fff"/><path d="M1317 828l3.500 2.500-3.500 2.500-4-2.500z" fill="#fff"/>
<path d="M1326 827l7-5 5-1-2 5 1 5-4 2-5-1z" fill="#f07a14"/><circle cx="1332" cy="828" r="2" fill="#fff"/>
<rect x="1345.5" y="823.500" width="12" height="8" fill="none" stroke="#ddd"/><path d="M1348 834.500h7M1351.5 832v2" stroke="#ddd"/><path d="M1344 822h4v4h-4z" fill="#ccc"/>
<path d="M1364 826h2l3-3v10l-3-3h-2z" fill="none" stroke="#ddd"/><path d="M1371 825c1 2 1 4 0 6M1373 823c2 3 2 7 0 10" fill="none" stroke="#ddd"/>
<text x="1384" y="832" style="font-size:11px;fill:#ddd" textLength="18" lengthAdjust="spacingAndGlyphs">ENG</text>
<text x="1424" y="825" style="font-size:11px;fill:#ddd" textLength="17" lengthAdjust="spacingAndGlyphs">9:28</text>
<text x="1412" y="839" style="font-size:11px;fill:#ddd" textLength="42" lengthAdjust="spacingAndGlyphs">19.11.2018</text>
<path d="M1468.5 822.500h12v9h-4l-2 2.500-2-2.500h-4z" fill="none" stroke="#eee" stroke-width="1.1"/>
</svg>
<div class="pal">
<i style="background:#222"></i><i style="background:#3a3a3a"></i><i style="background:#555"></i><i style="background:#6e6e6e"></i><i style="background:#858585"></i><i style="background:#9a9a9a"></i><i style="background:#b0b0b0"></i><i style="background:#c4c4c4"></i><i style="background:#d8d8d8"></i><i style="background:#ebebeb"></i><i style="background:#fff"></i><i style="background:#e8308e"></i><i style="background:#9a9490"></i><i style="background:#8aa5b0"></i><i style="background:#3a2a82"></i><i style="background:#009fe0"></i><i style="background:#00a04f"></i><i style="background:#fff200"></i><i style="background:#ec1c24"></i><i style="background:#ec008c"></i><i style="background:#ad4a80"></i><i style="background:#f58220"></i><i style="background:#f9aeb4"></i><i style="background:#8a7a70"></i><i style="background:#cfcbe4"></i><i style="background:#a99cc9"></i><i style="background:#6f8cc6"></i><i style="background:#7b68aa"></i><i style="background:#8b85ab"></i><i style="background:#50648f"></i><i style="background:#55546e"></i>
<i style="background:#6f84a6"></i><i style="background:#0b7fc7"></i><i style="background:#8fcff0"></i><i style="background:#a9c5d7"></i><i style="background:#8ea2ae"></i><i style="background:#6c7d87"></i><i style="background:#47545c"></i><i style="background:#54726f"></i><i style="background:#3f7d72"></i><i style="background:#6f9493"></i><i style="background:#4a9e90"></i><i style="background:#55a078"></i><i style="background:#58bccb"></i><i style="background:#4ea3b2"></i><i style="background:#b0c5b8"></i><i style="background:#d2e6d6"></i><i style="background:#a0d0a8"></i><i style="background:#8f9f96"></i><i style="background:#90a07e"></i><i style="background:#b7bd75"></i><i style="background:#b0c09a"></i><i style="background:#a8c82e"></i><i style="background:#d6e088"></i><i style="background:#56584c"></i><i style="background:#858572"></i><i style="background:#aeab98"></i><i style="background:#a9a67c"></i><i style="background:#dccf72"></i><i style="background:#fdf084"></i><i style="background:#fdf5aa"></i><i style="background:#fff9dc"></i><i style="background:#a68e70"></i><i style="background:#cf9464"></i><i style="background:#d5aa6a"></i><i style="background:#f47c44"></i><i style="background:#fba23e"></i><i style="background:#faa470"></i>
<i style="background:#fdc41c"></i><i style="background:#fdd5a0"></i><i style="background:#807155"></i><i style="background:#a7604a"></i><i style="background:#c87038"></i><i style="background:#f58460"></i><i style="background:#fab096"></i><i style="background:#fcdccc"></i><i style="background:#ab7c82"></i><i style="background:#cf6e70"></i><i style="background:#cd708a"></i><i style="background:#e60048"></i><i style="background:#f47c80"></i><i style="background:#ef506c"></i><i style="background:#d4949c"></i><i style="background:#835f70"></i><i style="background:#a25f7e"></i><i style="background:#f5b0cc"></i><i style="background:#d09ab8"></i><i style="background:#a8969e"></i>
</div>
</body></html>
